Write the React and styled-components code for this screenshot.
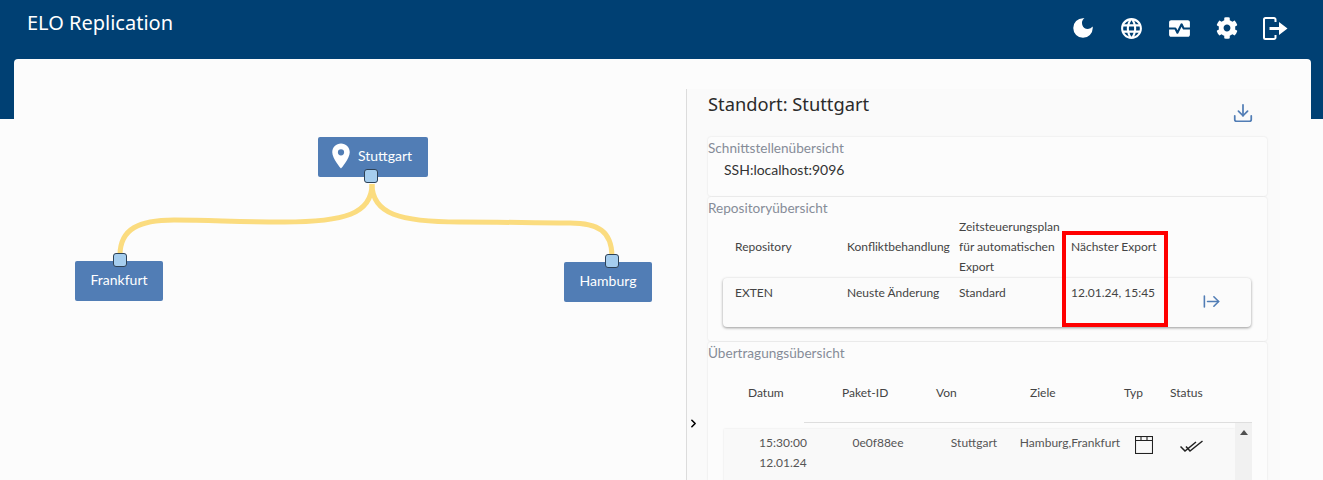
import React from 'react';
import styled, { createGlobalStyle } from 'styled-components';
import { MdDarkMode, MdLanguage, MdMonitorHeart, MdPlace } from 'react-icons/md';
import { FaCog } from 'react-icons/fa';
import { Download, ArrowRightFromLine, ChevronRight } from 'lucide-react';

const GlobalStyle = createGlobalStyle`
  html, body { margin: 0; padding: 0; height: 480px; overflow: hidden; background: #fcfcfc; }
  body { font-family: Lato, "Noto Sans", sans-serif; color: #3a3a3a; }
`;

const Page = styled.div`
  width: 1323px;
  height: 480px;
  overflow: hidden;
`;

const TopBar = styled.header`
  height: 119px;
  box-sizing: border-box;
  background: #004073;
  display: flex;
  justify-content: space-between;
  align-items: flex-start;
  padding: 4px 24px 0 27px;
`;

const Title = styled.div`
  color: #fff;
  font-family: "Noto Sans", sans-serif;
  font-size: 20px;
  line-height: 38px;
`;

const IconRow = styled.nav`
  display: flex;
`;

const IconButton = styled.div`
  width: 48px;
  height: 48px;
  display: flex;
  align-items: center;
  justify-content: center;
  color: #fff;
`;

const Card = styled.main`
  margin: -60px 12px 0 14px;
  height: 440px;
  background: #fcfcfc;
  border-radius: 4px;
  display: flex;
  position: relative;
`;

const Diagram = styled.section`
  width: 672px;
  flex: none;
  position: relative;
`;

const Edges = styled.svg`
  position: absolute;
  left: 0;
  top: 0;
`;

const Node = styled.div`
  position: absolute;
  left: ${p => p.$x}px;
  top: ${p => p.$y}px;
  width: ${p => p.$w}px;
  height: 40px;
  padding-bottom: 3px;
  box-sizing: border-box;
  background: #517db5;
  border-radius: 2px;
  color: #fff;
  font-size: 14px;
  display: flex;
  align-items: center;
  justify-content: center;
  gap: 2px;
`;

const Pin = styled(MdPlace)`
  margin-left: -8px;
`;

const Handle = styled.span`
  position: absolute;
  left: ${p => p.$x}px;
  top: ${p => p.$y}px;
  width: 12px;
  height: 12px;
  background: #a5cdee;
  border: 1.5px solid #2e4257;
  border-radius: 3px;
`;

const Details = styled.aside`
  margin-top: 30px;
  width: 594px;
  box-sizing: border-box;
  border-left: 1px solid #dcdcdc;
  background: #fafafa;
  padding: 0 13px 0 21px;
  position: relative;
`;

const Toggle = styled.div`
  position: absolute;
  left: 0;
  top: 328px;
  color: #000;
  display: flex;
`;

const DetailsHead = styled.div`
  height: 48px;
  display: flex;
  justify-content: space-between;
`;

const DetailsTitle = styled.h2`
  margin: 0;
  font-family: "Noto Sans", sans-serif;
  font-size: 18.3px;
  font-weight: 400;
  line-height: 30px;
  color: #2b2b2b;
`;

const SaveIcon = styled.div`
  color: #517db5;
  margin: 13px 13px 0 0;
  display: flex;
`;

const Panel = styled.section`
  background: #fcfcfc;
  box-shadow: 0 0 2px rgba(0, 0, 0, 0.12);
  border-radius: 3px;
  margin-bottom: 1px;
  height: ${p => p.$h}px;
`;

const PanelTitle = styled.div`
  font-size: 13.6px;
  line-height: 22px;
  color: #868c98;
`;

const Interface = styled.div`
  font-size: 14px;
  line-height: 22px;
  padding-left: 16px;
  color: #333;
`;

const RepoTable = styled.div`
  position: relative;
  margin: -2px 0 0 15px;
  width: 528px;
`;

const RepoGrid = styled.div`
  display: grid;
  grid-template-columns: repeat(4, 112px) 1fr;
  align-items: center;
  font-size: 12px;
  line-height: 20px;
  color: #444;
  padding-bottom: 1px;
  & > div { padding-left: 12px; }
`;

const RepoRow = styled(RepoGrid)`
  height: 49px;
  box-sizing: border-box;
  align-items: start;
  padding: 5px 0 0;
  border-radius: 4px;
  background: #fbfbfb;
  box-shadow: 0 1px 3px rgba(0, 0, 0, 0.4);
`;

const GoIcon = styled.div`
  color: #517db5;
  display: flex;
  padding: 9px 0 0 31px !important;
`;

const Highlight = styled.div`
  position: absolute;
  left: 339px;
  top: 14px;
  width: 106px;
  height: 96px;
  box-sizing: border-box;
  border: 4px solid #f00;
  padding: 0 !important;
`;

const TransferHead = styled.div`
  margin-left: 16px;
  height: 59px;
  width: 528px;
  box-sizing: border-box;
  padding: 19px 0 0 24px;
  display: grid;
  grid-template-columns: repeat(4, 94px) 46px 1fr;
  font-size: 12px;
  line-height: 20px;
  color: #444;
  position: relative;
  &::after {
    content: '';
    position: absolute;
    left: 80px;
    right: 0;
    bottom: 0;
    height: 1px;
    background: #dedede;
  }
`;

const TransferBody = styled.div`
  margin-left: 16px;
  width: 528px;
  display: flex;
`;

const TransferRow = styled.div`
  flex: 1;
  height: 54px;
  box-sizing: border-box;
  margin-top: 6px;
  background: #f9f9f9;
  box-shadow: 0 0 2px rgba(0, 0, 0, 0.1);
  display: grid;
  grid-template-columns: 98px 92px 100px 92px 56px 38px;
  justify-items: center;
  align-items: start;
  text-align: center;
  white-space: nowrap;
  font-size: 12px;
  line-height: 20px;
  color: #555;
  padding: 4px 0 0 10px;
`;

const IconCell = styled.div`
  display: flex;
  justify-content: center;
  color: #222;
  padding-top: ${p => p.$top}px;
`;

const Scrollbar = styled.div`
  width: 17px;
  background: #f1f1f1;
  display: flex;
  justify-content: center;
  padding-top: 7px;
  height: 60px;
  box-sizing: border-box;
  &::before {
    content: '';
    border-left: 4px solid transparent;
    border-right: 4px solid transparent;
    border-bottom: 5px solid #505050;
    height: 0;
  }
`;

const LogoutIcon = () => (
  <svg width="25" height="23" viewBox="0 0 25 23" fill="none">
    <path d="M12.5 5V2.5A1.5 1.5 0 0 0 11 1H2.5A1.5 1.5 0 0 0 1 2.5v18A1.5 1.5 0 0 0 2.5 22H11a1.5 1.5 0 0 0 1.5-1.5V18" stroke="#fff" strokeWidth="2" />
    <path d="M6.5 10H16V5l8.5 6.5L16 18v-5H6.5z" fill="#fff" />
  </svg>
);

const WindowIcon = () => (
  <svg width="18" height="18" viewBox="0 0 18 18" fill="none" stroke="currentColor" strokeWidth="1.1">
    <rect x="0.5" y="0.5" width="17" height="17" />
    <path d="M0.5 4.5h17M6 0.5v4M12 0.5v4" />
  </svg>
);

const DoubleCheck = () => (
  <svg width="23" height="13" viewBox="0 0 23 13" fill="none" stroke="currentColor" strokeWidth="1.5">
    <path d="M0.5 6.5L5 11L16 2" />
    <path d="M6 6.5L10 11L22.5 1" />
  </svg>
);

export default function App() {
  return (
    <Page>
      <GlobalStyle />
      <TopBar>
        <Title>ELO Replication</Title>
        <IconRow>
          <IconButton><MdDarkMode size={26} /></IconButton>
          <IconButton><MdLanguage size={25} /></IconButton>
          <IconButton><MdMonitorHeart size={25} /></IconButton>
          <IconButton><FaCog size={22} /></IconButton>
          <IconButton><LogoutIcon /></IconButton>
        </IconRow>
      </TopBar>
      <Card>
        <Diagram>
          <Edges width="672" height="300" fill="none" stroke="#fbdc7f" strokeWidth="5">
            <path d="M358 125C358 155 330 163 270 163C220 163 200 161 160 161C125 161 106 170 106 196" />
            <path d="M358 125C358 155 386 163 446 163C496 163 516 164 556 164C584 164 598 172 598 198" />
          </Edges>
          <Node $x={304} $y={78} $w={110}>
            <Pin size={30} />
            Stuttgart
            <Handle $x={46} $y={32} />
          </Node>
          <Node $x={61} $y={202} $w={88}>
            Frankfurt
            <Handle $x={38} $y={-8} />
          </Node>
          <Node $x={550} $y={203} $w={88}>
            Hamburg
            <Handle $x={41} $y={-8} />
          </Node>
        </Diagram>
        <Details>
          <Toggle><ChevronRight size={13} strokeWidth={3} /></Toggle>
          <DetailsHead>
            <DetailsTitle>Standort: Stuttgart</DetailsTitle>
            <SaveIcon><Download size={22} strokeWidth={1.9} /></SaveIcon>
          </DetailsHead>
          <Panel $h={59}>
            <PanelTitle>Schnittstellenübersicht</PanelTitle>
            <Interface>SSH:localhost:9096</Interface>
          </Panel>
          <Panel $h={144}>
            <PanelTitle>Repositoryübersicht</PanelTitle>
            <RepoTable>
              <RepoGrid>
                <div>Repository</div>
                <div>Konfliktbehandlung</div>
                <div>Zeitsteuerungsplan für automatischen Export</div>
                <div>Nächster Export</div>
                <div />
              </RepoGrid>
              <RepoRow>
                <div>EXTEN</div>
                <div>Neuste Änderung</div>
                <div>Standard</div>
                <div>12.01.24, 15:45</div>
                <GoIcon><ArrowRightFromLine size={19} strokeWidth={2} /></GoIcon>
              </RepoRow>
              <Highlight />
            </RepoTable>
          </Panel>
          <Panel $h={140}>
            <PanelTitle>Übertragungsübersicht</PanelTitle>
            <TransferHead>
              <div>Datum</div>
              <div>Paket-ID</div>
              <div>Von</div>
              <div>Ziele</div>
              <div>Typ</div>
              <div>Status</div>
            </TransferHead>
            <TransferBody>
              <TransferRow>
                <div>15:30:00<br />12.01.24</div>
                <div>0e0f88ee</div>
                <div>Stuttgart</div>
                <div>Hamburg,Frankfurt</div>
                <IconCell $top={3}><WindowIcon /></IconCell>
                <IconCell $top={7}><DoubleCheck /></IconCell>
              </TransferRow>
              <Scrollbar />
            </TransferBody>
          </Panel>
        </Details>
      </Card>
    </Page>
  );
}
